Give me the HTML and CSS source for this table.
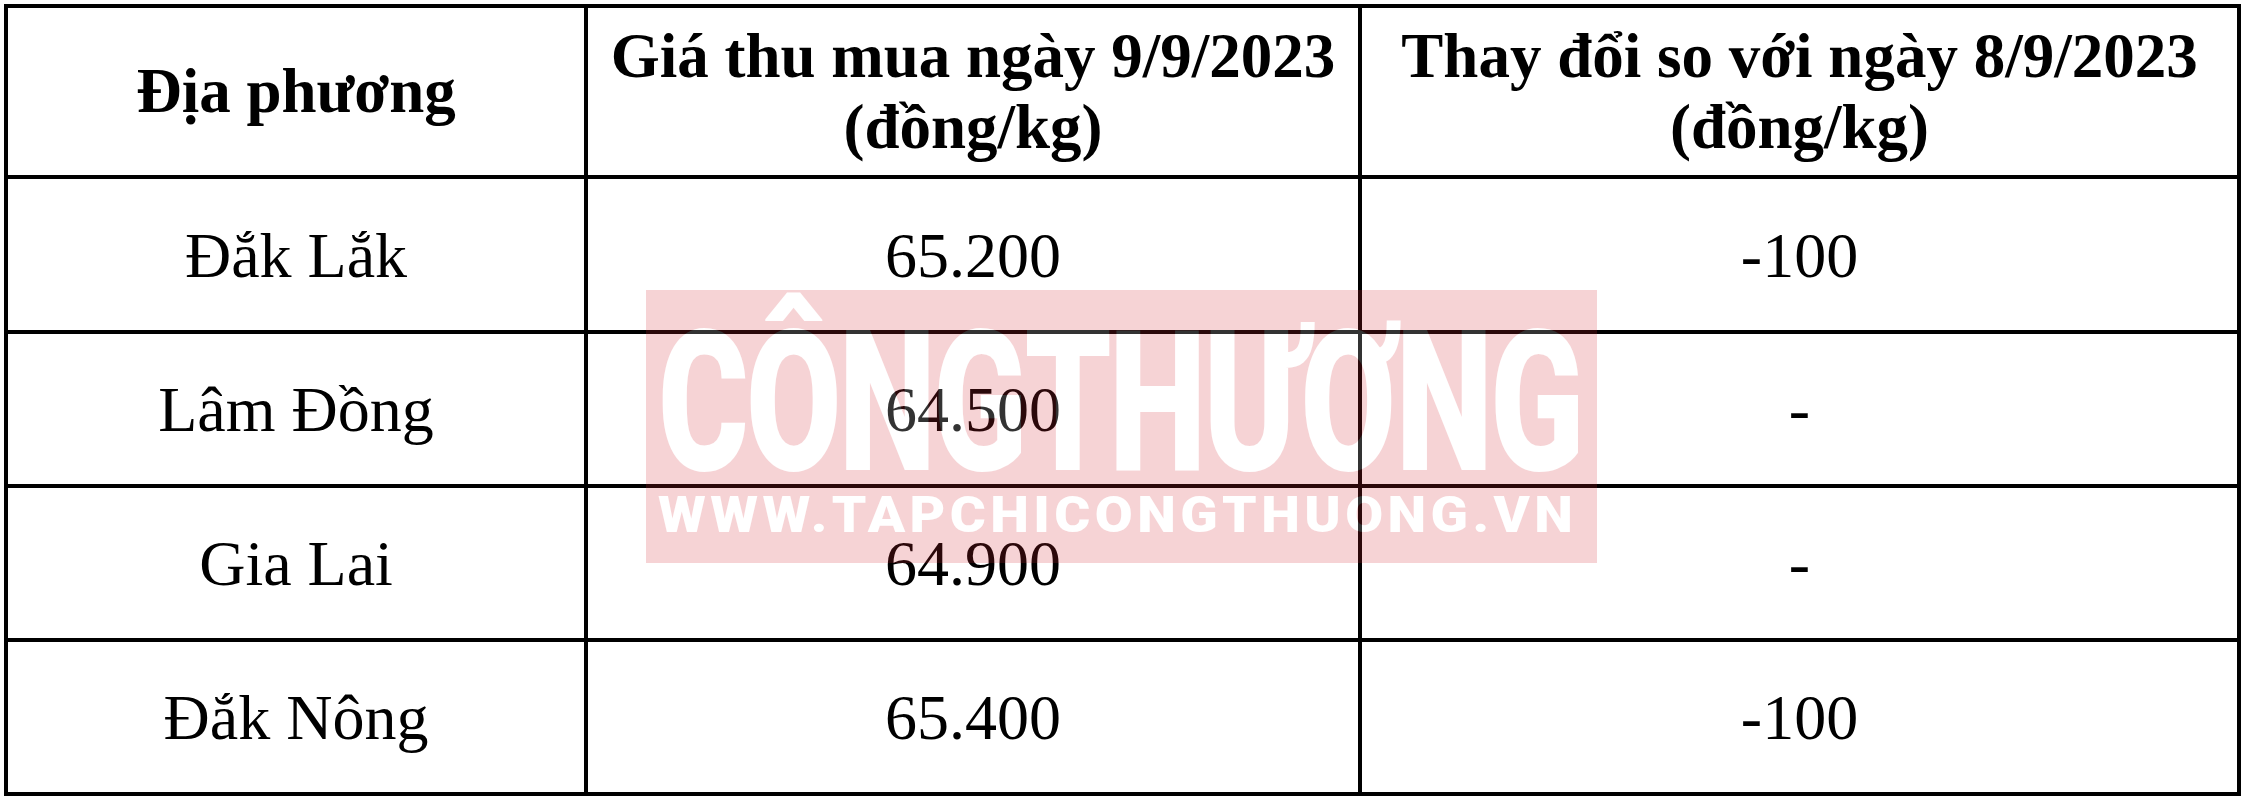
FILE: index.html
```html
<!DOCTYPE html>
<html lang="vi">
<head>
<meta charset="utf-8">
<title>Giá thu mua</title>
<link rel="stylesheet" href="styles.css">
</head>
<body>
<div class="page">
  <div class="grid">
    <div class="cell head">Địa phương</div>
    <div class="cell head">Giá thu mua ngày 9/9/2023<br>(đồng/kg)</div>
    <div class="cell head">Thay đổi so với ngày 8/9/2023<br>(đồng/kg)</div>

    <div class="cell">Đắk Lắk</div>
    <div class="cell">65.200</div>
    <div class="cell">-100</div>

    <div class="cell">Lâm Đồng</div>
    <div class="cell">64.500</div>
    <div class="cell">-</div>

    <div class="cell">Gia Lai</div>
    <div class="cell">64.900</div>
    <div class="cell">-</div>

    <div class="cell">Đắk Nông</div>
    <div class="cell">65.400</div>
    <div class="cell">-100</div>
  </div>

  <div class="watermark">
    <div class="wm-big"><span>CÔNGTHƯƠNG</span></div>
    <div class="wm-small"><span>WWW.TAPCHICONGTHUONG.VN</span></div>
  </div>
</div>
</body>
</html>
```

FILE: styles.css
```css
html, body {
  margin: 0;
  padding: 0;
  background: #ffffff;
}

.page {
  position: relative;
  width: 2244px;
  height: 802px;
  overflow: hidden;
  font-family: "Liberation Serif", "Times New Roman", serif;
  color: #000;
}

.grid {
  margin: 4px 0 0 4px;
  display: grid;
  grid-template-columns: 580px 774px 879px;
  grid-template-rows: 171px 155px 154px 154px 154px;
  border-left: 4px solid #000;
  border-top: 4px solid #000;
  width: max-content;
}

.cell {
  box-sizing: border-box;
  border-right: 4px solid #000;
  border-bottom: 4px solid #000;
  display: flex;
  align-items: center;
  justify-content: center;
  text-align: center;
  font-size: 64px;
  line-height: 74px;
  padding-top: 2px;
}

.head {
  font-weight: 700;
  font-size: 63px;
  line-height: 71px;
  padding-top: 0;
}

.watermark {
  position: absolute;
  left: 646px;
  top: 290px;
  width: 951px;
  height: 273px;
  background: rgb(215, 40, 50);
  opacity: 0.2;
  color: #fff;
  font-family: Roboto, "Liberation Sans", sans-serif;
  font-weight: 900;
  box-sizing: border-box;
  padding: 28px 0 0 12px;
  white-space: nowrap;
}

.wm-big {
  font-size: 196px;
  line-height: 170px;
  height: 170px;
}

.wm-big span {
  display: inline-block;
  transform: scaleX(0.706);
  transform-origin: 0 50%;
  letter-spacing: -4px;
}

.wm-small {
  margin-top: 2px;
  font-size: 50px;
  line-height: 50px;
}

.wm-small span {
  display: inline-block;
  transform: scaleX(1.1);
  transform-origin: 0 50%;
  letter-spacing: 4px;
}
```
